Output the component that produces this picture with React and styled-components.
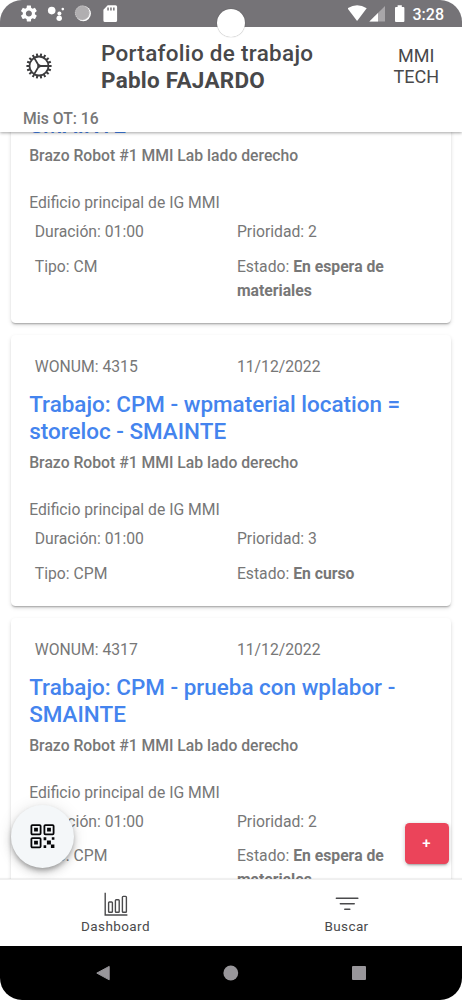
import React from 'react'
import styled, { createGlobalStyle } from 'styled-components'

const workOrders = [
  {
    wonum: '4313',
    date: '11/12/2022',
    title: 'Trabajo: CM - prueba con material - SMAINTE',
    duration: '01:00',
    priority: 2,
    type: 'CM',
    status: 'En espera de materiales',
  },
  {
    wonum: '4315',
    date: '11/12/2022',
    title: 'Trabajo: CPM - wpmaterial location = storeloc - SMAINTE',
    duration: '01:00',
    priority: 3,
    type: 'CPM',
    status: 'En curso',
  },
  {
    wonum: '4317',
    date: '11/12/2022',
    title: 'Trabajo: CPM - prueba con wplabor - SMAINTE',
    duration: '01:00',
    priority: 2,
    type: 'CPM',
    status: 'En espera de materiales',
  },
]

// gear teeth, one every 20 degrees
const teeth = Array.from({ length: 18 }, (_, i) => i * 20)

const GearIcon = () => (
  <svg width="26" height="26" viewBox="0 0 26 26" fill="none" stroke="#3c3c3e">
    <circle cx="13" cy="13" r="9.5" strokeWidth="1.8" />
    {teeth.map(a => (
      <path key={a} d="M13 3.6V.4" strokeWidth="2" transform={`rotate(${a + 10} 13 13)`} />
    ))}
    <path d="M13 13h9.4M13 13L8.2 4.9M13 13l-4.8 8.1" strokeWidth="1.8" />
    <circle cx="13" cy="13" r="1.8" fill="#3c3c3e" stroke="none" />
  </svg>
)

const StatusIcons = () => (
  <svg width="104" height="20" viewBox="0 0 104 20" fill="#fff">
    <path
      transform="translate(-.2 -.6) scale(.84)"
      d="M19.14 12.94c.04-.3.06-.61.06-.94 0-.32-.02-.64-.07-.94l2.03-1.58c.18-.14.23-.41.12-.61l-1.92-3.32c-.12-.22-.37-.29-.59-.22l-2.39.96c-.5-.38-1.03-.7-1.62-.94l-.36-2.54c-.04-.24-.24-.41-.48-.41h-3.84c-.24 0-.43.17-.47.41l-.36 2.54c-.59.24-1.13.57-1.62.94l-2.39-.96c-.22-.08-.47 0-.59.22L2.74 8.87c-.12.21-.08.47.12.61l2.03 1.58c-.05.3-.09.63-.09.94s.02.64.07.94l-2.03 1.58c-.18.14-.23.41-.12.61l1.92 3.32c.12.22.37.29.59.22l2.39-.96c.5.38 1.03.7 1.62.94l.36 2.54c.05.24.24.41.48.41h3.84c.24 0 .44-.17.47-.41l.36-2.54c.59-.24 1.13-.56 1.62-.94l2.39.96c.22.08.47 0 .59-.22l1.92-3.32c.12-.22.07-.47-.12-.61l-2.01-1.58zM12 15.6c-1.98 0-3.6-1.62-3.6-3.6s1.62-3.6 3.6-3.6 3.6 1.62 3.6 3.6-1.62 3.6-3.6 3.6z"
    />
    <circle cx="32.7" cy="6.6" r="3.8" />
    <circle cx="40.4" cy="9.4" r="2" />
    <circle cx="43.8" cy="5.1" r="1.3" />
    <circle cx="40.2" cy="14.3" r="2.7" />
    <circle cx="64.3" cy="9.6" r="7.6" />
    <circle cx="63.3" cy="8.9" r="7.3" fill="#b0aeb0" />
    <circle cx="63.3" cy="8.9" r="7" fill="none" stroke="#d2d1d2" strokeWidth=".8" strokeDasharray="1 1.2" />
    <path d="M88.7 1.2h7.8a1.6 1.6 0 0 1 1.6 1.6v13.6a1.6 1.6 0 0 1-1.6 1.6H86a1.6 1.6 0 0 1-1.6-1.6V5.8z" />
    <path d="M88.3 3.4h1.5v3.1h-1.5zM91.2 3.4h1.5v3.1h-1.5zM94.1 3.4h1.5v3.1h-1.5z" fill="#757377" />
  </svg>
)

const SignalIcons = () => (
  <svg width="60" height="20" viewBox="0 0 60 20" fill="#fff">
    <path d="M-.5 4.3Q9.2-2 18.7 4.3L9.1 17z" />
    <path d="M37 2v15.6H21.4z" fill="#a8a6a9" />
    <path d="M30 9v8.6h-8.6z" />
    <path d="M49.6 1.2h4.2v1.7h1.6a1 1 0 0 1 1 1V17a1 1 0 0 1-1 1H48a1 1 0 0 1-1-1V3.9a1 1 0 0 1 1-1h1.6z" />
  </svg>
)

const QrIcon = () => (
  <svg width="25" height="25" viewBox="0 0 25 25">
    <g fill="none" stroke="#050608" strokeWidth="1.8">
      <rect x="1.4" y="1.1" width="9.2" height="9.2" rx="1" />
      <rect x="14.4" y="1.1" width="9.2" height="9.2" rx="1" />
      <rect x="1.4" y="14.1" width="9.2" height="9.2" rx="1" />
    </g>
    <path
      fill="#050608"
      d="M4.1 3.8h3.8v3.8H4.1zM17.1 3.8h3.8v3.8h-3.8zM4.1 16.8h3.8v3.8H4.1zM16.9 16.6h4v4h-4zM13.6 13.3h2.7v2.9h-2.7zM21.8 13.3h2.6v2.5h-2.6zM13.6 21.2h2.6v2.9h-2.6zM20.9 20.4h3.5v3.7h-3.5z"
    />
  </svg>
)

const ChartIcon = () => (
  <svg width="24" height="24" viewBox="0 0 24 24" fill="none" stroke="#4a4a4c" strokeWidth="1.4">
    <path d="M1.2.8v22.2h22.2" />
    <rect x="4.6" y="10" width="3.8" height="10.2" rx=".8" />
    <rect x="11.4" y="7.8" width="3.8" height="12.4" rx=".8" />
    <rect x="18.4" y="4.4" width="4" height="15.8" rx=".8" />
  </svg>
)

const FilterIcon = () => (
  <svg width="24" height="24" viewBox="0 0 24 24" stroke="#4a4a4c" strokeWidth="1.6" strokeLinecap="round">
    <path d="M1.4 6.2h21.4M5.4 11.8h13.8M9.8 17.2h5" />
  </svg>
)

const WorkOrder = ({ order }) => (
  <Card>
    <Row>
      <Cell>WONUM: {order.wonum}</Cell>
      <Cell>{order.date}</Cell>
    </Row>
    <CardTitle>{order.title}</CardTitle>
    <Asset>Brazo Robot #1 MMI Lab lado derecho</Asset>
    <Location>Edificio principal de IG MMI</Location>
    <Details>
      <Cell>Duración: {order.duration}</Cell>
      <Cell>Prioridad: {order.priority}</Cell>
      <Cell>Tipo: {order.type}</Cell>
      <Cell>
        Estado: <b>{order.status}</b>
      </Cell>
    </Details>
  </Card>
)

const App = () => (
  <Phone>
    <GlobalStyle />
    <StatusBar>
      <StatusIcons />
      <StatusRight>
        <SignalIcons />
        <Clock>3:28</Clock>
      </StatusRight>
      <Camera />
    </StatusBar>
    <Header>
      <Toolbar>
        <GearIcon />
        <Heading>
          Portafolio de trabajo
          <strong>Pablo FAJARDO</strong>
        </Heading>
        <Company>
          MMI
          <br />
          TECH
        </Company>
      </Toolbar>
      <Counter>Mis OT: 16</Counter>
    </Header>
    <Content>
      <List>
        {workOrders.map(order => (
          <WorkOrder key={order.wonum} order={order} />
        ))}
      </List>
      <ScanButton>
        <QrIcon />
      </ScanButton>
      <AddButton>+</AddButton>
    </Content>
    <TabBar>
      <Tab>
        <ChartIcon />
        Dashboard
      </Tab>
      <Tab>
        <FilterIcon />
        Buscar
      </Tab>
    </TabBar>
    <SystemNav>
      <svg width="14" height="16" viewBox="0 0 14 16" fill="#98969a">
        <path d="M13.2 1.4v13.4L.8 8.1z" stroke="#98969a" strokeLinejoin="round" />
      </svg>
      <svg width="16" height="16" viewBox="0 0 16 16" fill="#98969a">
        <circle cx="7.8" cy="8" r="7.4" />
      </svg>
      <svg width="14" height="14" viewBox="0 0 14 14" fill="#98969a">
        <rect width="14" height="14" rx="1" />
      </svg>
    </SystemNav>
  </Phone>
)

export default App

const GlobalStyle = createGlobalStyle`
  * {
    box-sizing: border-box;
  }
  body {
    margin: 0;
    background: #fff;
    font-family: Roboto, 'Liberation Sans', sans-serif;
  }
  svg {
    display: block;
    flex-shrink: 0;
  }
`

const Phone = styled.div`
  display: flex;
  flex-direction: column;
  width: 462px;
  height: 1000px;
  overflow: hidden;
  border-radius: 22px;
  background: #fff;
`

const StatusBar = styled.div`
  position: relative;
  z-index: 3;
  display: flex;
  justify-content: space-between;
  align-items: flex-start;
  height: 27px;
  padding: 4px 18px 0 19px;
  flex-shrink: 0;
  background: #757377;
`

const StatusRight = styled.div`
  display: flex;
  gap: 5px;
`

const Clock = styled.span`
  font-size: 16px;
  line-height: 21px;
  font-weight: 500;
  color: #fff;
`

const Camera = styled.div`
  position: absolute;
  left: 217px;
  top: 9px;
  width: 28px;
  height: 28px;
  border-radius: 50%;
  background: #fff;
  box-shadow: 0 0 1px rgba(0, 0, 0, 0.5);
`

const Header = styled.header`
  position: relative;
  z-index: 2;
  height: 105px;
  flex-shrink: 0;
  background: #fff;
  box-shadow: 0 1px 3px rgba(0, 0, 0, 0.36);
`

const Toolbar = styled.div`
  display: flex;
  align-items: center;
  height: 78px;
  padding: 0 23px 0 26px;
`

const Heading = styled.h1`
  flex: 1;
  margin: 2px 0 0 49px;
  font-size: 22.46px;
  line-height: 27px;
  font-weight: 500;
  letter-spacing: 0.31px;
  color: #48484a;
  strong {
    display: block;
    font-weight: 700;
    letter-spacing: 0.28px;
  }
`

const Company = styled.div`
  font-size: 18px;
  line-height: 21px;
  text-align: center;
  color: #48484a;
`

const Counter = styled.div`
  padding-left: 23px;
  font-size: 15.7px;
  line-height: 27px;
  font-weight: 500;
  color: #777;
`

const Content = styled.main`
  position: relative;
  flex: 1;
  min-height: 0;
  overflow: hidden;
`

const List = styled.div`
  display: flex;
  flex-direction: column;
  gap: 11.2px;
  margin-top: -103.9px;
  padding: 0 10.6px 0 11.2px;
`

const Card = styled.section`
  flex-shrink: 0;
  padding: 20.2px 18px 21.2px;
  border-radius: 4.5px;
  background: #fff;
  box-shadow: 0 2px 2px -1px rgba(0, 0, 0, 0.3), 0 2px 4px rgba(0, 0, 0, 0.13);
  font-size: 15.72px;
  line-height: 23.6px;
  color: #777;
`

const Row = styled.div`
  display: grid;
  grid-template-columns: 1fr 1fr;
`

const Cell = styled.div`
  padding: 0 5.6px;
`

const CardTitle = styled.h2`
  margin: 12.7px 0 5.7px;
  font-size: 22.46px;
  line-height: 27px;
  font-weight: 500;
  color: #4484ee;
`

const Asset = styled.div`
  font-weight: 500;
`

const Location = styled.div`
  margin-top: 23.5px;
`

const Details = styled(Row)`
  margin-top: 5.5px;
  row-gap: 11px;
`

const ScanButton = styled.button`
  position: absolute;
  left: 11px;
  top: 673px;
  display: flex;
  align-items: center;
  justify-content: center;
  width: 63px;
  height: 63px;
  border: none;
  border-radius: 50%;
  background: #f4f7f9;
  box-shadow: 0 3px 5px -1px rgba(0, 0, 0, 0.3), 0 5px 10px rgba(0, 0, 0, 0.12), 0 1px 16px rgba(0, 0, 0, 0.1);
`

const AddButton = styled.button`
  position: absolute;
  left: 405px;
  top: 691px;
  width: 44px;
  height: 41px;
  padding: 0 1px 2px 0;
  border: none;
  border-radius: 4.5px;
  background: #eb445a;
  box-shadow: 0 3px 2px -2px rgba(0, 0, 0, 0.25), 0 1px 4px rgba(0, 0, 0, 0.22);
  font-family: inherit;
  font-size: 15px;
  font-weight: 500;
  color: #fff;
`

const TabBar = styled.nav`
  position: relative;
  display: flex;
  height: 67px;
  flex-shrink: 0;
  border-top: 1px solid #efefef;
  background: #fff;
  box-shadow: 0 -1px 1px rgba(0, 0, 0, 0.06);
`

const Tab = styled.div`
  flex: 1;
  display: flex;
  flex-direction: column;
  align-items: center;
  gap: 1px;
  padding-top: 12px;
  font-size: 13.5px;
  line-height: 18px;
  letter-spacing: 0.4px;
  color: #4a4a4c;
`

const SystemNav = styled.div`
  display: flex;
  justify-content: center;
  align-items: center;
  gap: 113px;
  height: 54px;
  flex-shrink: 0;
  background: #000;
`
